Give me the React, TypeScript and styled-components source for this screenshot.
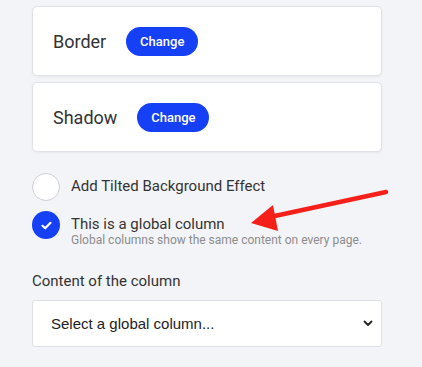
import React, { useState } from "react";
import styled, { createGlobalStyle } from "styled-components";

const GlobalStyle = createGlobalStyle`
  html, body {
    margin: 0;
    padding: 0;
    background: #f3f4f8;
    font-family: Roboto, "Liberation Sans", Arial, sans-serif;
    color: #333;
  }
`;

const Page = styled.div`
  position: relative;
  width: 422px;
  height: 367px;
  overflow: hidden;
  box-sizing: border-box;
  padding: 6px 40px 0 32px;
`;

const Card = styled.div`
  display: flex;
  align-items: center;
  gap: 20px;
  height: 70px;
  box-sizing: border-box;
  padding: 0 20px;
  margin-bottom: 6px;
  background: #fff;
  border: 1px solid #e1e2e8;
  border-radius: 5px;
  box-shadow: 0 1px 3px rgba(0, 0, 0, 0.05);
`;

const CardTitle = styled.span`
  font-size: 18px;
  color: #333;
`;

const ChangeButton = styled.button`
  height: 29px;
  width: 72px;
  border: none;
  border-radius: 15px;
  background: #1540f5;
  color: #fff;
  font-family: Roboto, sans-serif;
  font-weight: 500;
  font-size: 13px;
  cursor: pointer;
`;

const Options = styled.div`
  display: flex;
  flex-direction: column;
  gap: 10px;
  margin-top: 21px;
`;

const Option = styled.label`
  display: flex;
  align-items: flex-start;
  gap: 11px;
  cursor: pointer;
`;

const Circle = styled.span<{ $checked: boolean }>`
  flex: none;
  width: 28px;
  height: 28px;
  box-sizing: border-box;
  border-radius: 50%;
  display: flex;
  align-items: center;
  justify-content: center;
  background: ${p => (p.$checked ? "#1540f5" : "#fff")};
  border: ${p => (p.$checked ? "none" : "1px solid #cfd0d6")};
`;

const OptionText = styled.div`
  display: flex;
  flex-direction: column;
  padding-top: 4px;
`;

const OptionLabel = styled.span`
  font-size: 15px;
  line-height: 18px;
  color: #333;
`;

const Hint = styled.span`
  font-size: 12px;
  line-height: 14px;
  color: #8c8c8c;
`;

const FieldLabel = styled.div`
  font-size: 15px;
  color: #333;
  margin-top: 25px;
  line-height: 18px;
`;

const SelectBox = styled.div`
  margin-top: 10px;
  height: 47px;
  box-sizing: border-box;
  background: #fff;
  border: 1px solid #dfe0e5;
  border-radius: 3px;
  display: flex;
  align-items: center;
  padding: 0 18px;
  font-family: "Liberation Sans", Arial, sans-serif;
  font-size: 15px;
  color: #222;
`;

const Chevron = styled.svg`
  margin-left: auto;
  margin-right: -10px;
`;

const Arrow = styled.svg`
  position: absolute;
  left: 0;
  top: 0;
  pointer-events: none;
`;

function Check() {
  return (
    <svg width="11" height="9" viewBox="0 0 11 9">
      <path d="M1.5 4.8 L4.2 7.3 L9.5 1.8" fill="none" stroke="#fff" strokeWidth="2.2" strokeLinecap="round" strokeLinejoin="round" />
    </svg>
  );
}

export default function App() {
  const [tilted, setTilted] = useState(false);
  const [global, setGlobal] = useState(true);

  return (
    <>
      <GlobalStyle />
      <Page>
        <Card>
          <CardTitle>Border</CardTitle>
          <ChangeButton>Change</ChangeButton>
        </Card>
        <Card>
          <CardTitle>Shadow</CardTitle>
          <ChangeButton>Change</ChangeButton>
        </Card>

        <Options>
          <Option onClick={() => setTilted(!tilted)}>
            <Circle $checked={tilted}>{tilted && <Check />}</Circle>
            <OptionText>
              <OptionLabel>Add Tilted Background Effect</OptionLabel>
            </OptionText>
          </Option>
          <Option onClick={() => setGlobal(!global)}>
            <Circle $checked={global}>{global && <Check />}</Circle>
            <OptionText>
              <OptionLabel>This is a global column</OptionLabel>
              <Hint>Global columns show the same content on every page.</Hint>
            </OptionText>
          </Option>
        </Options>

        <FieldLabel>Content of the column</FieldLabel>
        <SelectBox>
          Select a global column...
          <Chevron width="10" height="7" viewBox="0 0 10 7">
            <path d="M1.5 1.5 L5 5 L8.5 1.5" fill="none" stroke="#222" strokeWidth="1.8" strokeLinecap="round" strokeLinejoin="round" />
          </Chevron>
        </SelectBox>

        {/* annotation arrow */}
        <Arrow width="422" height="367" viewBox="0 0 422 367">
          <line x1="386" y1="192" x2="270" y2="217" stroke="#f5201a" strokeWidth="4.5" strokeLinecap="round" />
          <polygon points="251,223 273,205 278,231" fill="#f5201a" />
        </Arrow>
      </Page>
    </>
  );
}
